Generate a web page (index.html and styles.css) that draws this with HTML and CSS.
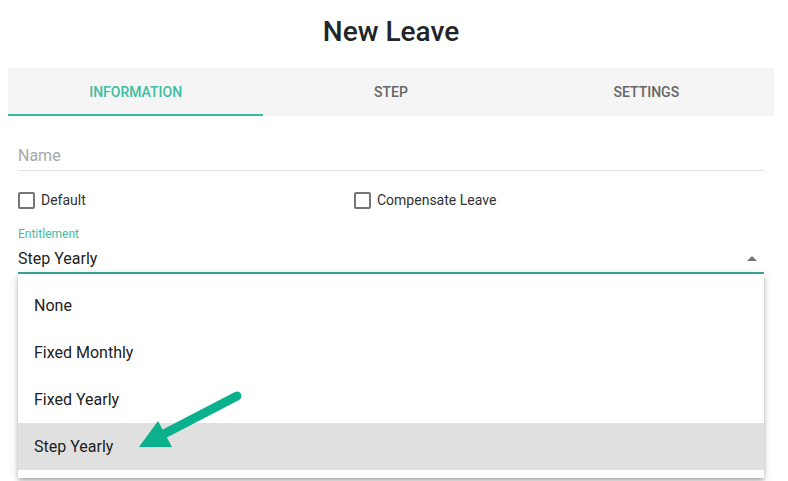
FILE: index.html
```html
<!DOCTYPE html>
<html>
<head>
<meta charset="utf-8">
<title>New Leave</title>
<link rel="stylesheet" href="styles.css">
</head>
<body>
<div class="page">
  <h1 class="title">New Leave</h1>
  <div class="tabs">
    <div class="tab active">INFORMATION</div>
    <div class="tab">STEP</div>
    <div class="tab">SETTINGS</div>
  </div>
  <div class="form">
    <div class="name-field">Name</div>
    <div class="check-row">
      <label class="check"><span class="box"></span><span class="check-label">Default</span></label>
      <label class="check"><span class="box"></span><span class="check-label">Compensate Leave</span></label>
    </div>
    <div class="select-wrap">
      <div class="select-label">Entitlement</div>
      <div class="select-value">
        <span>Step Yearly</span>
        <span class="caret"></span>
      </div>
      <ul class="menu">
        <li class="item">None</li>
        <li class="item">Fixed Monthly</li>
        <li class="item">Fixed Yearly</li>
        <li class="item selected">Step Yearly</li>
      </ul>
    </div>
  </div>
</div>
<svg class="pointer" width="788" height="481" viewBox="0 0 788 481">
  <line x1="237" y1="396" x2="160" y2="436" stroke="#0bb08c" stroke-width="9" stroke-linecap="round"/>
  <polygon points="139,447 158,421 172,447" fill="#0bb08c"/>
</svg>
</body>
</html>
```

FILE: styles.css
```css
html, body {
  margin: 0;
  padding: 0;
  background: #ffffff;
}

body {
  position: relative;
  font-family: Roboto, "Liberation Sans", Arial, sans-serif;
  color: #212121;
  width: 788px;
  height: 481px;
  overflow: hidden;
}

.page {
  width: 766px;
  margin-left: 8px;
  padding-top: 15px;
}

.title {
  margin: 0 0 20px 0;
  font-size: 28px;
  line-height: 33px;
  font-weight: 500;
  color: #212529;
  text-align: center;
}

.tabs {
  display: flex;
  height: 48px;
  background: #f5f5f5;
}

.tab {
  flex: 1;
  display: flex;
  align-items: center;
  justify-content: center;
  padding-bottom: 1px;
  font-size: 14px;
  font-weight: 500;
  color: #666666;
}

.tab.active {
  color: #3dbda2;
  box-shadow: inset 0 -2px 0 #38bba0;
}

.form {
  padding: 0 10px;
}

.name-field {
  margin-top: 30px;
  height: 20px;
  line-height: 20px;
  font-size: 16px;
  color: #a8a8a8;
  padding-bottom: 4px;
  border-bottom: 1px solid #e3e3e3;
}

.check-row {
  display: grid;
  grid-template-columns: 336px 1fr;
  margin-top: 19px;
  height: 20px;
}

.check {
  display: flex;
  align-items: center;
  gap: 6px;
}

.box {
  width: 13px;
  height: 13px;
  border: 2px solid #767676;
  border-radius: 2px;
}

.check-label {
  font-size: 14px;
  line-height: 20px;
  color: #333333;
}

.select-wrap {
  position: relative;
  margin-top: 17px;
}

.select-label {
  font-size: 12px;
  line-height: 14px;
  color: #3dbda2;
}

.select-value {
  margin-top: 8px;
  display: flex;
  justify-content: space-between;
  align-items: center;
  height: 20px;
  line-height: 20px;
  font-size: 16px;
  color: #222222;
  padding-bottom: 3px;
  border-bottom: 2px solid #3aa898;
}

.caret {
  width: 0;
  height: 0;
  border-left: 5px solid transparent;
  border-right: 5px solid transparent;
  border-bottom: 5px solid #757575;
  margin-right: 7px;
  margin-bottom: 2px;
}

.menu {
  position: absolute;
  top: 100%;
  left: 0;
  right: 0;
  margin: 0;
  padding: 8px 0;
  list-style: none;
  background: #ffffff;
  box-shadow: 0 2px 4px -1px rgba(0,0,0,0.2), 0 4px 5px 0 rgba(0,0,0,0.14), 0 1px 10px 0 rgba(0,0,0,0.12);
}

.item {
  height: 47px;
  line-height: 47px;
  padding-left: 16px;
  font-size: 16px;
  color: #212121;
}

.item.selected {
  background: #e0e0e0;
}

.pointer {
  position: absolute;
  left: 0;
  top: 0;
  pointer-events: none;
}
```
